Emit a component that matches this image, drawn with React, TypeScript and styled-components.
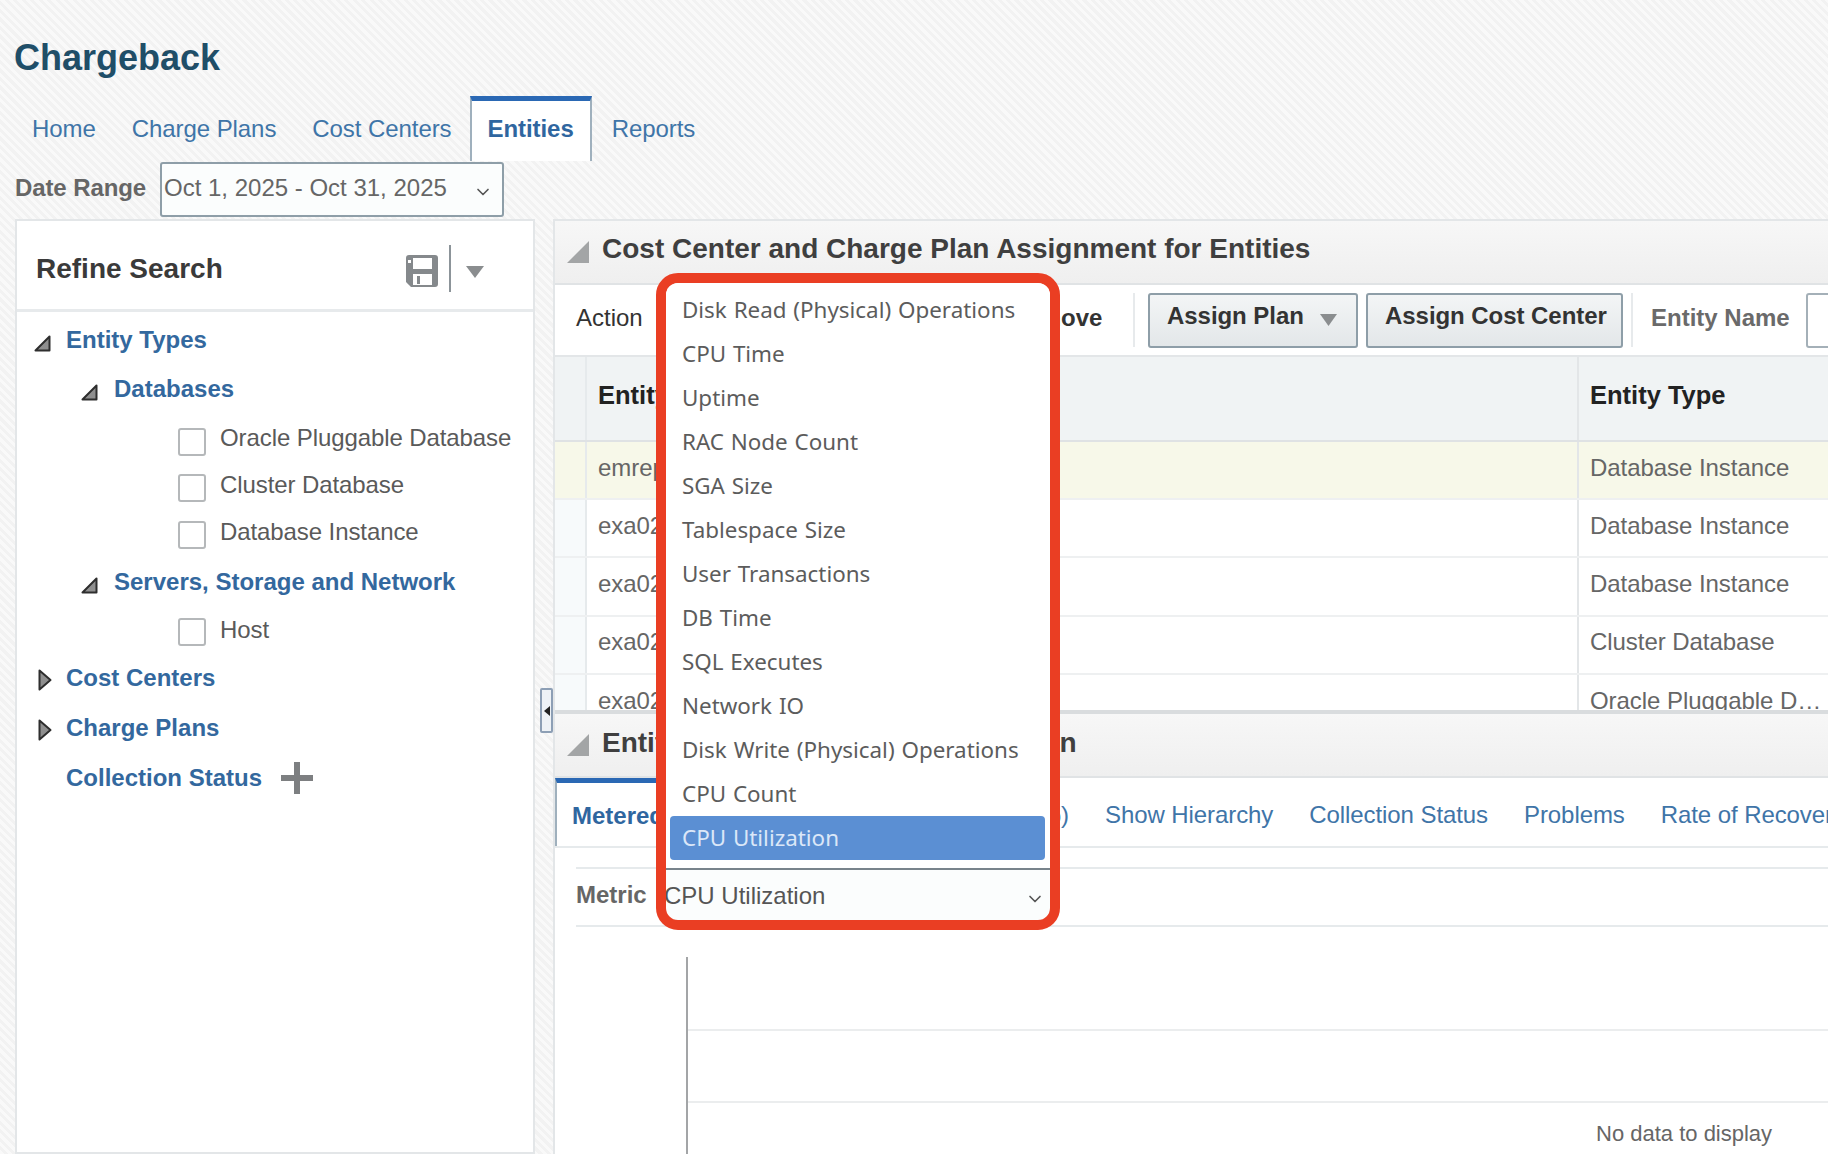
import React from "react";
import styled, { createGlobalStyle } from "styled-components";
import { ChevronDown } from "lucide-react";

const Global = createGlobalStyle`
  html, body { margin: 0; padding: 0; background: #f6f6f6; }
  * { box-sizing: border-box; }
`;

const Page = styled.div`
  position: relative;
  width: 1828px;
  height: 1154px;
  overflow: hidden;
  padding-left: 15px;
  display: flex;
  flex-direction: column;
  font-family: "Liberation Sans", Arial, sans-serif;
  font-size: 24px;
  color: #555;
  background: repeating-linear-gradient(45deg, #f9f9f9 0 3px, #f2f2f2 3px 6px);
`;

const Title = styled.h1`
  margin: 0 0 0 -1px;
  height: 96px;
  padding-top: 37px;
  font-size: 36px;
  line-height: 42px;
  font-weight: 700;
  color: #1f4e68;
`;

const TabBar = styled.nav`
  display: flex;
  height: 65px;
  margin-left: -1px;
  letter-spacing: -0.07px;
`;

const PageTab = styled.div<{ $active?: boolean }>`
  padding: 0 ${(p) => (p.$active ? 16 : 18)}px;
  margin-right: ${(p) => (p.$active ? 2 : 0)}px;
  line-height: ${(p) => (p.$active ? 55 : 65)}px;
  color: #3f75a8;
  font-weight: ${(p) => (p.$active ? 700 : 400)};
  ${(p) =>
    p.$active
      ? `background:#fff;border-top:5px solid #2a68b4;border-left:2px solid #9fb0bd;border-right:2px solid #9fb0bd;color:#2f669f;`
      : ""}
`;

const DateRow = styled.div`
  display: flex;
  height: 58px;
  padding-top: 1px;
`;

const FieldLabel = styled.span`
  font-weight: 700;
  color: #666;
  line-height: 52px;
  width: 145px;
  flex: none;
  letter-spacing: -0.1px;
`;

const DateSelect = styled.div`
  width: 344px;
  height: 55px;
  padding-left: 2px;
  display: flex;
  justify-content: space-between;
  background: #fbfdfd;
  border: 2px solid #8e9ea8;
  border-radius: 3px;
  line-height: 48px;
  color: #666;
`;

const DateChevron = styled(ChevronDown)`
  margin: 18px 9px 0 0;
  color: #555;
`;

const Main = styled.div`
  flex: 1;
  display: flex;
  min-height: 0;
`;

const LeftPanel = styled.aside`
  width: 520px;
  flex: none;
  background: #fff;
  border: 2px solid #e3e6e8;
`;

const RefineHeader = styled.header`
  height: 91px;
  display: flex;
  align-items: center;
  padding: 7px 0 0 19px;
  border-bottom: 3px solid #e7eaec;
`;

const RefineTitle = styled.h2`
  margin: 0;
  width: 370px;
  font-size: 28px;
  font-weight: 700;
  color: #3a3a3a;
  line-height: 34px;
`;

const HeaderDivider = styled.span`
  width: 2px;
  height: 47px;
  margin: 0 15px 0 11px;
  background: #8c9499;
`;

const SaveGlyph = styled.svg`
  margin-top: 4px;
`;

const RefineCaret = styled.span`
  display: flex;
  margin-top: 7px;
`;

const Tree = styled.div`
  display: flex;
  flex-direction: column;
  padding-top: 4px;
`;

const TreeRow = styled.div<{ $top: number; $indent: number }>`
  display: flex;
  align-items: center;
  height: 46px;
  margin-top: ${(p) => p.$top}px;
  padding-left: ${(p) => p.$indent}px;
`;

const Twist = styled.svg<{ $drop?: number }>`
  flex: none;
  overflow: visible;
  margin-top: ${(p) => p.$drop ?? 0}px;
`;

const TreeLink = styled.span<{ $left: number }>`
  margin-left: ${(p) => p.$left}px;
  font-weight: 700;
  color: #33689e;
`;

const Check = styled.span<{ $drop: number }>`
  flex: none;
  width: 28px;
  height: 28px;
  margin-top: ${(p) => p.$drop}px;
  background: #fff;
  border: 2px solid #b5b8ba;
  border-radius: 3px;
`;

const CheckLabel = styled.span`
  margin-left: 14px;
  margin-bottom: -1px;
  letter-spacing: -0.09px;
  color: #5a5a5a;
`;

const PlusIcon = styled.svg`
  margin-left: 19px;
`;

const Gutter = styled.div`
  width: 18px;
  flex: none;
  padding: 469px 0 0 5px;
`;

const SplitHandle = styled.div`
  width: 13px;
  height: 45px;
  display: flex;
  align-items: center;
  justify-content: center;
  background: #eef2f6;
  border: 2px solid #8d9fb5;
  border-radius: 2px;
`;

const RightPanel = styled.section`
  flex: 1;
  min-width: 0;
  display: flex;
  flex-direction: column;
  background: #fff;
  border-left: 2px solid #e3e6e8;
  border-top: 2px solid #e3e6e8;
`;

const PanelTitle = styled.h2`
  margin: -6px 0 0;
  font-size: 28px;
  font-weight: 700;
  line-height: 34px;
  color: #3f3f3f;
  white-space: nowrap;
`;

const PanelHeader = styled.header<{ $h: number; $rule?: boolean }>`
  flex: none;
  height: ${(p) => p.$h}px;
  display: flex;
  align-items: center;
  gap: 13px;
  padding-left: 12px;
  background: linear-gradient(#f7f7f7, #efefef);
  border-bottom: 2px solid #e0e3e5;
  ${(p) => (p.$rule ? "border-top: 4px solid #d9dcde;" : "")}
  ${PanelTitle} {
    margin-top: ${(p) => (p.$rule ? -4 : -6)}px;
  }
`;

const PanelTwistBox = styled.span`
  display: flex;
`;

const Toolbar = styled.div`
  flex: none;
  height: 70px;
  display: flex;
  align-items: center;
  padding-left: 21px;
  white-space: nowrap;
`;

const ActionLabel = styled.span`
  width: 433px;
  flex: none;
  margin-top: -4px;
  color: #333;
`;

const RemoveText = styled.span`
  width: 124px;
  flex: none;
  padding-right: 36px;
  margin-top: -4px;
  font-weight: 700;
  color: #333;
`;

const ToolDivider = styled.span`
  width: 2px;
  height: 54px;
  flex: none;
  background: #e7eaec;
`;

const ToolButton = styled.button<{ $w: number; $first?: boolean }>`
  width: ${(p) => p.$w}px;
  height: 55px;
  flex: none;
  margin: 0 8px 0 ${(p) => (p.$first ? 13 : 0)}px;
  padding: 0 0 8px 17px;
  display: flex;
  align-items: center;
  font: 700 24px "Liberation Sans", Arial, sans-serif;
  letter-spacing: -0.05px;
  color: #333;
  background: linear-gradient(#f3f5f6, #e3e7e9);
  border: 2px solid #8e9ea8;
  border-radius: 3px;
`;

const ButtonCaret = styled.span`
  display: flex;
  margin: 8px 0 0 16px;
`;

const ToolLabel = styled.span`
  font-weight: 700;
  color: #6a6a6a;
  margin: -4px 16px 0 18px;
`;

const NameInput = styled.span`
  width: 60px;
  height: 55px;
  flex: none;
  background: #fff;
  border: 2px solid #a4b0b8;
  border-radius: 3px;
`;

const Table = styled.div`
  flex: none;
  height: 355px;
  overflow: hidden;
`;

const Row = styled.div<{ $h: number; $bg: string; $stub: string; $line: string }>`
  display: flex;
  height: ${(p) => p.$h}px;
  background: ${(p) => p.$bg};
  border-top: 2px solid ${(p) => p.$line};
  & > span:first-child {
    background: ${(p) => p.$stub};
  }
`;

const StubCell = styled.span`
  width: 32px;
  flex: none;
  border-right: 2px solid #e6eaec;
`;

const Cell = styled.span<{ $w?: number; $head?: boolean }>`
  ${(p) => (p.$w ? `width:${p.$w}px;flex:none;border-right:2px solid #e3e6e8;` : "flex:1;")}
  padding: 0 0 ${(p) => (p.$head ? 7 : 5)}px 11px;
  display: flex;
  align-items: center;
  white-space: nowrap;
  font-size: ${(p) => (p.$head ? 25.5 : 24)}px;
  letter-spacing: ${(p) => (p.$head ? 0 : -0.05)}px;
  font-weight: ${(p) => (p.$head ? 700 : 400)};
  color: ${(p) => (p.$head ? "#222" : "#666")};
`;

const SubTabs = styled.div`
  flex: none;
  height: 70px;
  display: flex;
  white-space: nowrap;
  border-bottom: 2px solid #e6eaec;
`;

const MeteredTab = styled.div`
  width: 170px;
  flex: none;
  padding: 8px 0 0 15px;
  line-height: 50px;
  font-weight: 700;
  color: #2f669f;
  border-top: 5px solid #2a68b4;
  border-left: 2px solid #9fb0bd;
`;

const HiddenTab = styled.div`
  width: 344px;
  flex: none;
  text-align: right;
  line-height: 74px;
  color: #3f75a8;
`;

const SubTab = styled.div<{ $lead?: number }>`
  padding: 0 18px;
  margin-left: ${(p) => p.$lead ?? 0}px;
  line-height: 74px;
  letter-spacing: -0.08px;
  color: #3f75a8;
`;

const MetricRow = styled.div`
  flex: none;
  height: 60px;
  margin: 19px 0 0 21px;
  display: flex;
  border-top: 2px solid #e6eaec;
  border-bottom: 2px solid #e6eaec;
`;

const MetricLabel = styled.span`
  width: 84px;
  flex: none;
  font-weight: 700;
  color: #666;
  line-height: 52px;
`;

const MetricSelect = styled.div`
  width: 394px;
  height: 56px;
  flex: none;
  padding: 0 0 0 4px;
  display: flex;
  justify-content: space-between;
  line-height: 54px;
  color: #555;
  background: #fbfdfd;
`;

const MetricChevron = styled(ChevronDown)`
  margin: 20px 9px 0 0;
  color: #555;
`;

const Chart = styled.div`
  flex: 1;
  margin: 30px 0 0 131px;
  border-left: 2px solid #a3a5a7;
  display: flex;
  flex-direction: column;
`;

const ChartBand = styled.div<{ $h: number }>`
  height: ${(p) => p.$h}px;
  flex: none;
  border-bottom: 2px solid #ebedee;
`;

const NoData = styled.div`
  padding: 18px 0 0 908px;
  font-size: 22px;
  line-height: 26px;
  color: #666;
  white-space: nowrap;
`;

const Frame = styled.div`
  position: absolute;
  left: 656px;
  top: 273px;
  width: 404px;
  height: 657px;
  border: 10px solid #ea3e23;
  border-radius: 22px;
`;

const OptionList = styled.ul`
  margin: 0;
  padding: 5px 5px 7px 4px;
  height: 587px;
  list-style: none;
  background: #fff;
  border-radius: 12px 12px 0 0;
  border-bottom: 2px solid #78838b;
`;

const Option = styled.li<{ $selected?: boolean }>`
  height: 44px;
  padding-left: 12px;
  line-height: 44px;
  font-family: "Noto Sans", sans-serif;
  font-size: 22.4px;
  word-spacing: 1px;
  white-space: nowrap;
  color: ${(p) => (p.$selected ? "#dbe7f8" : "#5c5c5c")};
  background: ${(p) => (p.$selected ? "#5b8fd3" : "transparent")};
  border-radius: 4px;
`;

const options = [
  "Disk Read (Physical) Operations",
  "CPU Time",
  "Uptime",
  "RAC Node Count",
  "SGA Size",
  "Tablespace Size",
  "User Transactions",
  "DB Time",
  "SQL Executes",
  "Network IO",
  "Disk Write (Physical) Operations",
  "CPU Count",
  "CPU Utilization",
];

const rows: [string, string][] = [
  ["emrep", "Database Instance"],
  ["exa02", "Database Instance"],
  ["exa02", "Database Instance"],
  ["exa02", "Cluster Database"],
  ["exa02", "Oracle Pluggable D…"],
];

const Down = () => (
  <Twist $drop={6} width="17" height="17" viewBox="0 0 17 17">
    <path d="M15.5 1.5V15.5H1.5Z" fill="#8f8f8f" stroke="#2e2e2e" strokeWidth="2" strokeLinejoin="round" />
  </Twist>
);

const Right = () => (
  <Twist $drop={4} width="14" height="22" viewBox="0 0 14 22">
    <path d="M1.5 1.5L12.5 11L1.5 20.5Z" fill="#8f8f8f" stroke="#2e2e2e" strokeWidth="2" strokeLinejoin="round" />
  </Twist>
);

const PanelTwist = () => (
  <PanelTwistBox>
    <Twist width="22" height="22" viewBox="0 0 22 22">
      <path d="M22 0V22H0Z" fill="#a3a5a6" />
    </Twist>
  </PanelTwistBox>
);

const SaveIcon = () => (
  <SaveGlyph width="32" height="32" viewBox="0 0 32 32">
    <path
      fillRule="evenodd"
      d="M3 0H29a3 3 0 0 1 3 3V29a3 3 0 0 1-3 3H5L0 27V3A3 3 0 0 1 3 0ZM7 3V14H26V3ZM2 5V8H5V5ZM7 19V30H26V19ZM11 21H14V29H11Z"
      fill="#85898c"
    />
  </SaveGlyph>
);

const Caret = ({ w, h }: { w: number; h: number }) => (
  <svg width={w} height={h} viewBox="0 0 18 12" preserveAspectRatio="none">
    <path d="M0 0H18L9 12Z" fill="#8a8d8f" />
  </svg>
);

export default function App() {
  return (
    <Page>
      <Global />
      <Title>Chargeback</Title>
      <TabBar>
        <PageTab>Home</PageTab>
        <PageTab>Charge Plans</PageTab>
        <PageTab>Cost Centers</PageTab>
        <PageTab $active>Entities</PageTab>
        <PageTab>Reports</PageTab>
      </TabBar>
      <DateRow>
        <FieldLabel>Date Range</FieldLabel>
        <DateSelect>
          Oct 1, 2025 - Oct 31, 2025
          <DateChevron size={20} strokeWidth={2} />
        </DateSelect>
      </DateRow>
      <Main>
        <LeftPanel>
          <RefineHeader>
            <RefineTitle>Refine Search</RefineTitle>
            <SaveIcon />
            <HeaderDivider />
            <RefineCaret>
              <Caret w={18} h={12} />
            </RefineCaret>
          </RefineHeader>
          <Tree>
            <TreeRow $top={1} $indent={17}>
              <Down />
              <TreeLink $left={15}>Entity Types</TreeLink>
            </TreeRow>
            <TreeRow $top={3} $indent={64}>
              <Down />
              <TreeLink $left={16}>Databases</TreeLink>
            </TreeRow>
            <TreeRow $top={2} $indent={161}>
              <Check $drop={10} />
              <CheckLabel>Oracle Pluggable Database</CheckLabel>
            </TreeRow>
            <TreeRow $top={1} $indent={161}>
              <Check $drop={8} />
              <CheckLabel>Cluster Database</CheckLabel>
            </TreeRow>
            <TreeRow $top={1} $indent={161}>
              <Check $drop={8} />
              <CheckLabel>Database Instance</CheckLabel>
            </TreeRow>
            <TreeRow $top={5} $indent={64}>
              <Down />
              <TreeLink $left={16}>Servers, Storage and Network</TreeLink>
            </TreeRow>
            <TreeRow $top={1} $indent={161}>
              <Check $drop={6} />
              <CheckLabel>Host</CheckLabel>
            </TreeRow>
            <TreeRow $top={3} $indent={21}>
              <Right />
              <TreeLink $left={14}>Cost Centers</TreeLink>
            </TreeRow>
            <TreeRow $top={4} $indent={21}>
              <Right />
              <TreeLink $left={14}>Charge Plans</TreeLink>
            </TreeRow>
            <TreeRow $top={4} $indent={49}>
              <TreeLink $left={0}>Collection Status</TreeLink>
              <PlusIcon width="32" height="32" viewBox="0 0 32 32">
                <path d="M13 0H19V13H32V19H19V32H13V19H0V13H13Z" fill="#7d7f81" />
              </PlusIcon>
            </TreeRow>
          </Tree>
        </LeftPanel>
        <Gutter>
          <SplitHandle>
            <svg width="6" height="10" viewBox="0 0 6 10">
              <path d="M6 0V10L0 5Z" fill="#222" />
            </svg>
          </SplitHandle>
        </Gutter>
        <RightPanel>
          <PanelHeader $h={64}>
            <PanelTwist />
            <PanelTitle>Cost Center and Charge Plan Assignment for Entities</PanelTitle>
          </PanelHeader>
          <Toolbar>
            <ActionLabel>Action</ActionLabel>
            <RemoveText>Remove</RemoveText>
            <ToolDivider />
            <ToolButton $w={210} $first>
              Assign Plan
              <ButtonCaret>
                <Caret w={17} h={12} />
              </ButtonCaret>
            </ToolButton>
            <ToolButton $w={257}>Assign Cost Center</ToolButton>
            <ToolDivider />
            <ToolLabel>Entity Name</ToolLabel>
            <NameInput />
          </Toolbar>
          <Table>
            <Row $h={85} $bg="#f0f3f4" $stub="#f0f3f4" $line="#e3e6e8">
              <StubCell />
              <Cell $w={992} $head>Entity Name</Cell>
              <Cell $head>Entity Type</Cell>
            </Row>
            {rows.map(([name, type], i) => (
              <Row
                key={i}
                $h={i === 0 ? 58 : 58.4}
                $bg={i === 0 ? "#f7f8e9" : "#fff"}
                $stub={i === 0 ? "#f7f8e9" : "#f7fafb"}
                $line={i === 0 ? "#dfe2e4" : "#eef0f1"}
              >
                <StubCell />
                <Cell $w={992}>{name}</Cell>
                <Cell>{type}</Cell>
              </Row>
            ))}
          </Table>
          <PanelHeader $h={68} $rule>
            <PanelTwist />
            <PanelTitle>Entity Chargeback Plan Information</PanelTitle>
          </PanelHeader>
          <SubTabs>
            <MeteredTab>Metered Usage</MeteredTab>
            <HiddenTab>Usage Trend (%)</HiddenTab>
            <SubTab $lead={18}>Show Hierarchy</SubTab>
            <SubTab>Collection Status</SubTab>
            <SubTab>Problems</SubTab>
            <SubTab>Rate of Recovery</SubTab>
          </SubTabs>
          <MetricRow>
            <MetricLabel>Metric</MetricLabel>
            <MetricSelect>
              CPU Utilization
              <MetricChevron size={20} strokeWidth={2} />
            </MetricSelect>
          </MetricRow>
          <Chart>
            <ChartBand $h={74} />
            <ChartBand $h={72} />
            <NoData>No data to display</NoData>
          </Chart>
        </RightPanel>
      </Main>
      <Frame>
        <OptionList>
          {options.map((o) => (
            <Option key={o} $selected={o === "CPU Utilization"}>
              {o}
            </Option>
          ))}
        </OptionList>
      </Frame>
    </Page>
  );
}
